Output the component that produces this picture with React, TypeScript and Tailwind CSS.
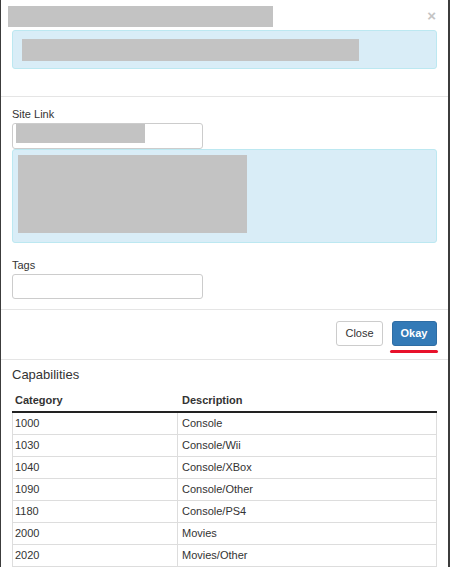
import React from "react";

const rows: [string, string][] = [
  ["1000", "Console"],
  ["1030", "Console/Wii"],
  ["1040", "Console/XBox"],
  ["1090", "Console/Other"],
  ["1180", "Console/PS4"],
  ["2000", "Movies"],
  ["2020", "Movies/Other"],
];

export default function App() {
  return (
    <div className="w-[450px] h-[567px] overflow-hidden bg-[#3c3c3c] pl-px pr-[2px]">
      <div className="h-full bg-white text-[#333] font-['Liberation_Sans',Arial,sans-serif]">
        {/* Header */}
        <div className="h-[97px] border-b border-[#e5e5e5]">
          <div className="flex items-start pt-[6px]">
            <div className="ml-[7px] w-[265px] h-[21px] bg-[#c3c3c3]" />
            <div className="ml-auto mr-[12px] mt-[2px] text-[15px] leading-[15px] font-bold text-[#c4c4c4]">×</div>
          </div>
          <div className="mt-[3px] mx-[11px] h-[39px] border border-[#bce8f1] bg-[#d9edf7] rounded-[3px] pt-[8px] pl-[9px]">
            <div className="w-[337px] h-[22px] bg-[#c3c3c3]" />
          </div>
        </div>

        {/* Body */}
        <div className="px-[11px] pt-[11px] pb-[10px]">
          <div className="text-[11px] leading-[13px] mb-[2px]">Site Link</div>
          <div className="w-[191px] h-[26px] border border-[#ccc] rounded-[3px] bg-white pl-[3px]">
            <div className="w-[129px] h-[19px] bg-[#c3c3c3]" />
          </div>
          <div className="h-[94px] border border-[#bce8f1] bg-[#d9edf7] rounded-[3px] pt-[5px] pl-[5px]">
            <div className="w-[229px] h-[78px] bg-[#c3c3c3]" />
          </div>
          <div className="mt-[16px] text-[11px] leading-[13px] mb-[2px]">Tags</div>
          <div className="w-[191px] h-[25px] border border-[#ccc] rounded-[3px] bg-white" />
        </div>

        {/* Footer */}
        <div className="h-[50px] border-t border-[#e5e5e5] flex justify-end items-start pt-[11px] pr-[10px] gap-[7px]">
          <button className="w-[47px] h-[25px] border border-[#ccc] rounded-[3px] bg-white text-[11px] text-[#333]">
            Close
          </button>
          <div className="flex flex-col items-center">
            <button className="w-[45px] h-[25px] border border-[#2e6da4] rounded-[3px] bg-[#337ab7] text-[11px] font-bold text-white">
              Okay
            </button>
            <div className="mt-[4px] w-[48px] h-[3px] rounded-full bg-[#e8112b]" />
          </div>
        </div>

        {/* Capabilities */}
        <div className="border-t border-[#e5e5e5] px-[11px] pt-[7px]">
          <div className="text-[13px] leading-[15px] text-[#333]">Capabilities</div>
          <div className="mt-[8px] w-[425px] text-[11px]">
            <div className="grid grid-cols-[165px_1fr] h-[23px] border-b-2 border-[#222] font-bold items-center">
              <div className="pl-[3px]">Category</div>
              <div className="pl-[5px]">Description</div>
            </div>
            <div className="border-x border-[#ddd]">
              {rows.map(([c, d]) => (
                <div key={c} className="grid grid-cols-[164px_1fr] h-[22px] border-b border-[#ddd] items-center">
                  <div className="pl-[2px]">{c}</div>
                  <div className="h-full flex items-center border-l border-[#ddd] pl-[4px]">{d}</div>
                </div>
              ))}
            </div>
          </div>
        </div>
      </div>
    </div>
  );
}
